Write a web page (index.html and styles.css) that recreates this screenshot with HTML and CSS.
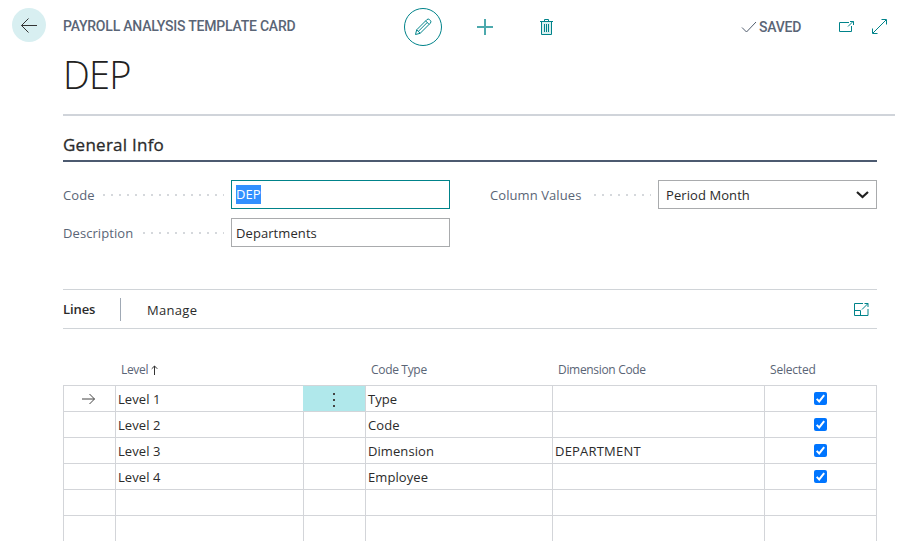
FILE: index.html
```html
<!DOCTYPE html>
<html lang="en">
<head>
<meta charset="utf-8">
<title>Payroll Analysis Template Card</title>
<link rel="stylesheet" href="styles.css">
</head>
<body>
<header class="topbar">
  <button class="back" aria-label="Back"><svg width="18" height="16" viewBox="0 0 18 16"><path d="M17 8.500H1.500M8.500 1.500L1.500 8.500l7 7"/></svg></button>
  <span class="caption">PAYROLL ANALYSIS TEMPLATE CARD</span>
  <div class="actions">
    <button class="edit" aria-label="Edit"><svg width="18" height="18" viewBox="0 0 18 18"><path d="M1.500 16.500l1.200-4.700L12.800 1.700a2 2 0 0 1 2.800 0l.7.7a2 2 0 0 1 0 2.800L6.200 15.300zM2.700 11.800l3.500 3.500M11.600 2.900l3.500 3.500M13.200 4.500L4.500 13.200"/></svg></button>
    <button class="add" aria-label="New"><svg width="16" height="16" viewBox="0 0 16 16"><path d="M8 0v16M0 8h16"/></svg></button>
    <button class="delete" aria-label="Delete"><svg width="13" height="16" viewBox="0 0 13 16"><path class="can" d="M1.500 2.500h10v13h-10z"/><path d="M0 2.500h13M4.500 2.500v-2h4v2M4.500 5v8M6.500 5v8M8.500 5v8"/></svg></button>
  </div>
  <div class="status">
    <svg class="check" width="16" height="12" viewBox="0 0 16 12"><path d="M1 6.500l4.500 4.500L15 1"/></svg>
    <span class="saved">SAVED</span>
    <svg class="popout" width="16" height="13" viewBox="0 0 16 13"><path d="M10 2.500H.5v9h12V6M9 6.500l5.500-5.500M11 1.500h3.500V5"/></svg>
    <svg class="expand" width="15" height="15" viewBox="0 0 15 15"><path d="M1 14L14 1M9.500.5h5v5M.5 9.500v5h5"/></svg>
  </div>
</header>
<main class="page">
  <h1 class="title"><span>DEP</span></h1>
  <section class="content">
    <h2 class="section-title"><span>General Info</span></h2>
    <form class="fields">
      <div class="field code"><label for="code">Code</label><i class="dots"></i><div class="box active" id="code"><mark>DEP</mark></div></div>
      <div class="field column"><label>Column Values</label><i class="dots"></i><div class="box select"><span>Period Month</span><svg width="13" height="8" viewBox="0 0 13 8"><path d="M1 1l5.500 5L12 1"/></svg></div></div>
      <div class="field description"><label>Description</label><i class="dots"></i><div class="box"><span>Departments</span></div></div>
    </form>
    <div class="lines-bar">
      <strong>Lines</strong>
      <span class="manage">Manage</span>
      <svg width="15" height="13" viewBox="0 0 15 13"><path d="M9 .5H.5v12h13.500V6M.5 7.500h6v5M8 6.500l6-6M10.500.5H14V4"/></svg>
    </div>
    <div class="grid">
      <div class="row head"><div></div><div><span>Level</span><svg width="7" height="10" viewBox="0 0 7 10"><path d="M3.500 10V1M.7 3.800L3.500 1l2.800 2.800"/></svg></div><div></div><div><span>Code Type</span></div><div><span>Dimension Code</span></div><div><span class="h-sel">Selected</span></div></div>
      <div class="row"><div class="pointer"><svg width="14" height="12" viewBox="0 0 14 12"><path d="M0 6h12.500M7.500 1l5 5-5 5"/></svg></div><div>Level 1</div><div class="menu"><i></i><i></i><i></i></div><div>Type</div><div></div><div class="sel"><svg class="tick" width="13" height="13" viewBox="0 0 13 13"><path d="M2.700 6.900l2.500 2.500 5-6.200"/></svg></div></div>
      <div class="row"><div></div><div>Level 2</div><div></div><div>Code</div><div></div><div class="sel"><svg class="tick" width="13" height="13" viewBox="0 0 13 13"><path d="M2.700 6.900l2.500 2.500 5-6.200"/></svg></div></div>
      <div class="row"><div></div><div>Level 3</div><div></div><div>Dimension</div><div><span class="dept">DEPARTMENT</span></div><div class="sel"><svg class="tick" width="13" height="13" viewBox="0 0 13 13"><path d="M2.700 6.900l2.500 2.500 5-6.200"/></svg></div></div>
      <div class="row"><div></div><div>Level 4</div><div></div><div>Employee</div><div></div><div class="sel"><svg class="tick" width="13" height="13" viewBox="0 0 13 13"><path d="M2.700 6.900l2.500 2.500 5-6.200"/></svg></div></div>
      <div class="row"><div></div><div></div><div></div><div></div><div></div><div></div></div>
      <div class="row"><div></div><div></div><div></div><div></div><div></div><div></div></div>
    </div>
  </section>
</main>
</body>
</html>
```
FILE: styles.css
```css
* { box-sizing: border-box; }
html, body { margin: 0; height: 541px; overflow: hidden; background: #fff; }
body { font-family: "Open Sans", "Noto Sans", sans-serif; font-size: 13px; letter-spacing: .08px; color: #2b2b2b; }
svg { display: block; fill: none; stroke: #00838a; stroke-width: 1; flex: none; }
button { border: 0; background: none; padding: 0; display: flex; align-items: center; justify-content: center; }

.topbar { height: 52px; display: grid; grid-template-columns: 51px 341px 1fr auto; padding: 0 30px 0 12px; align-items: center; }
.back { width: 34px; height: 34px; border-radius: 50%; background: #d8eff1; margin-top: -2px; }
.back svg { stroke: #333; }
.caption, .saved { font-family: Roboto, sans-serif; font-weight: 500; font-size: 14px; color: #5a6576; white-space: nowrap; }
.caption { letter-spacing: -.22px; }
.actions { display: flex; align-items: center; padding-top: 2px; }
.edit { width: 38px; height: 38px; border: 1px solid #00838a; border-radius: 50%; }
.add { margin-left: 35px; }
.add svg { stroke: #4da9ad; stroke-width: 2; }
.delete { margin-left: 47px; }
.can { fill: #d9efef; }
.status { display: flex; align-items: center; padding-top: 1px; }
.check { stroke: #505c6d; margin-right: 2px; }
.saved { width: 80px; letter-spacing: -.25px; }
.expand { margin-left: 17px; }

.page { padding: 0 22px 0 63px; }
.title { margin: 0; height: 64px; border-bottom: 2px solid #d0d4da; font-weight: 300; font-size: 38px; line-height: 45px; letter-spacing: -.8px; color: #212121; }
.content { margin-right: 18px; }
.section-title { margin: 0; height: 46px; padding-top: 17px; border-bottom: 2px solid #4c5a70; font-size: 17px; line-height: 24px; font-weight: 500; letter-spacing: .25px; -webkit-text-stroke: .3px #2b2b2b; }
.fields { display: grid; grid-template-columns: 387px 387px; column-gap: 40px; row-gap: 9px; padding-top: 18px; height: 127px; align-content: start; }
.field { display: flex; height: 29px; align-items: center; justify-content: space-between; color: #5a6576; }
.dots { width: 121px; height: 2px; margin: 1px 7px 0 auto; background: repeating-linear-gradient(to right, #d5d8dc 0 2px, transparent 2px 8px); }
.description .dots { width: 81px; }
.column .dots { width: 57px; }
.box { width: 219px; height: 29px; border: 1px solid #a9abad; padding: 0 4px; display: flex; align-items: center; color: #2b2b2b; }
.active { border-color: #00838a; }
mark { background: #3390ff; color: #fff; line-height: 19px; }
.select { padding: 0 7px; justify-content: space-between; }
.select svg { stroke: #212121; stroke-width: 2.200; }

.lines-bar { height: 40px; border: solid #d0d4d8; border-width: 1px 0; display: flex; align-items: center; }
.lines-bar strong { width: 58px; height: 23px; line-height: 22px; border-right: 1px solid #a0a9b5; font-weight: 600; letter-spacing: -.1px; }
.manage { margin-left: 26px; padding-top: 2px; flex: 1; letter-spacing: .3px; }
.lines-bar svg { margin-right: 8px; }

.grid { padding-top: 28px; }
.row { display: grid; grid-template-columns: 52px 188px 62px 187px 212px 113px; height: 26px; }
.row > div { border-top: 1px solid #d3d5d9; border-left: 1px solid #d3d5d9; display: flex; align-items: center; padding: 1px 0 0 2px; }
.row > div:last-child { border-right: 1px solid #d3d5d9; }
.row.head { height: 28px; font-size: 12px; letter-spacing: -.32px; color: #5a6576; }
.row.head > div { border: 0; padding: 0 0 3px 6px; }
.h-sel { letter-spacing: -.2px; }
.dept { letter-spacing: .2px; }
.head svg { stroke: #333; margin-left: 3px; }
.row > .pointer { padding: 0 2px 0 0; justify-content: center; }
.pointer svg { stroke: #444; }
.row > .menu { background: #b0e8eb; border-left-color: #b0e8eb; padding: 3px 1px 0 0; flex-direction: column; justify-content: center; gap: 4px; }
.menu i { width: 2px; height: 2px; background: #444; }
.row > .sel { padding: 0; justify-content: center; }
.tick { background: #0075ff; border-radius: 2px; stroke: #fff; stroke-width: 2; }
```
